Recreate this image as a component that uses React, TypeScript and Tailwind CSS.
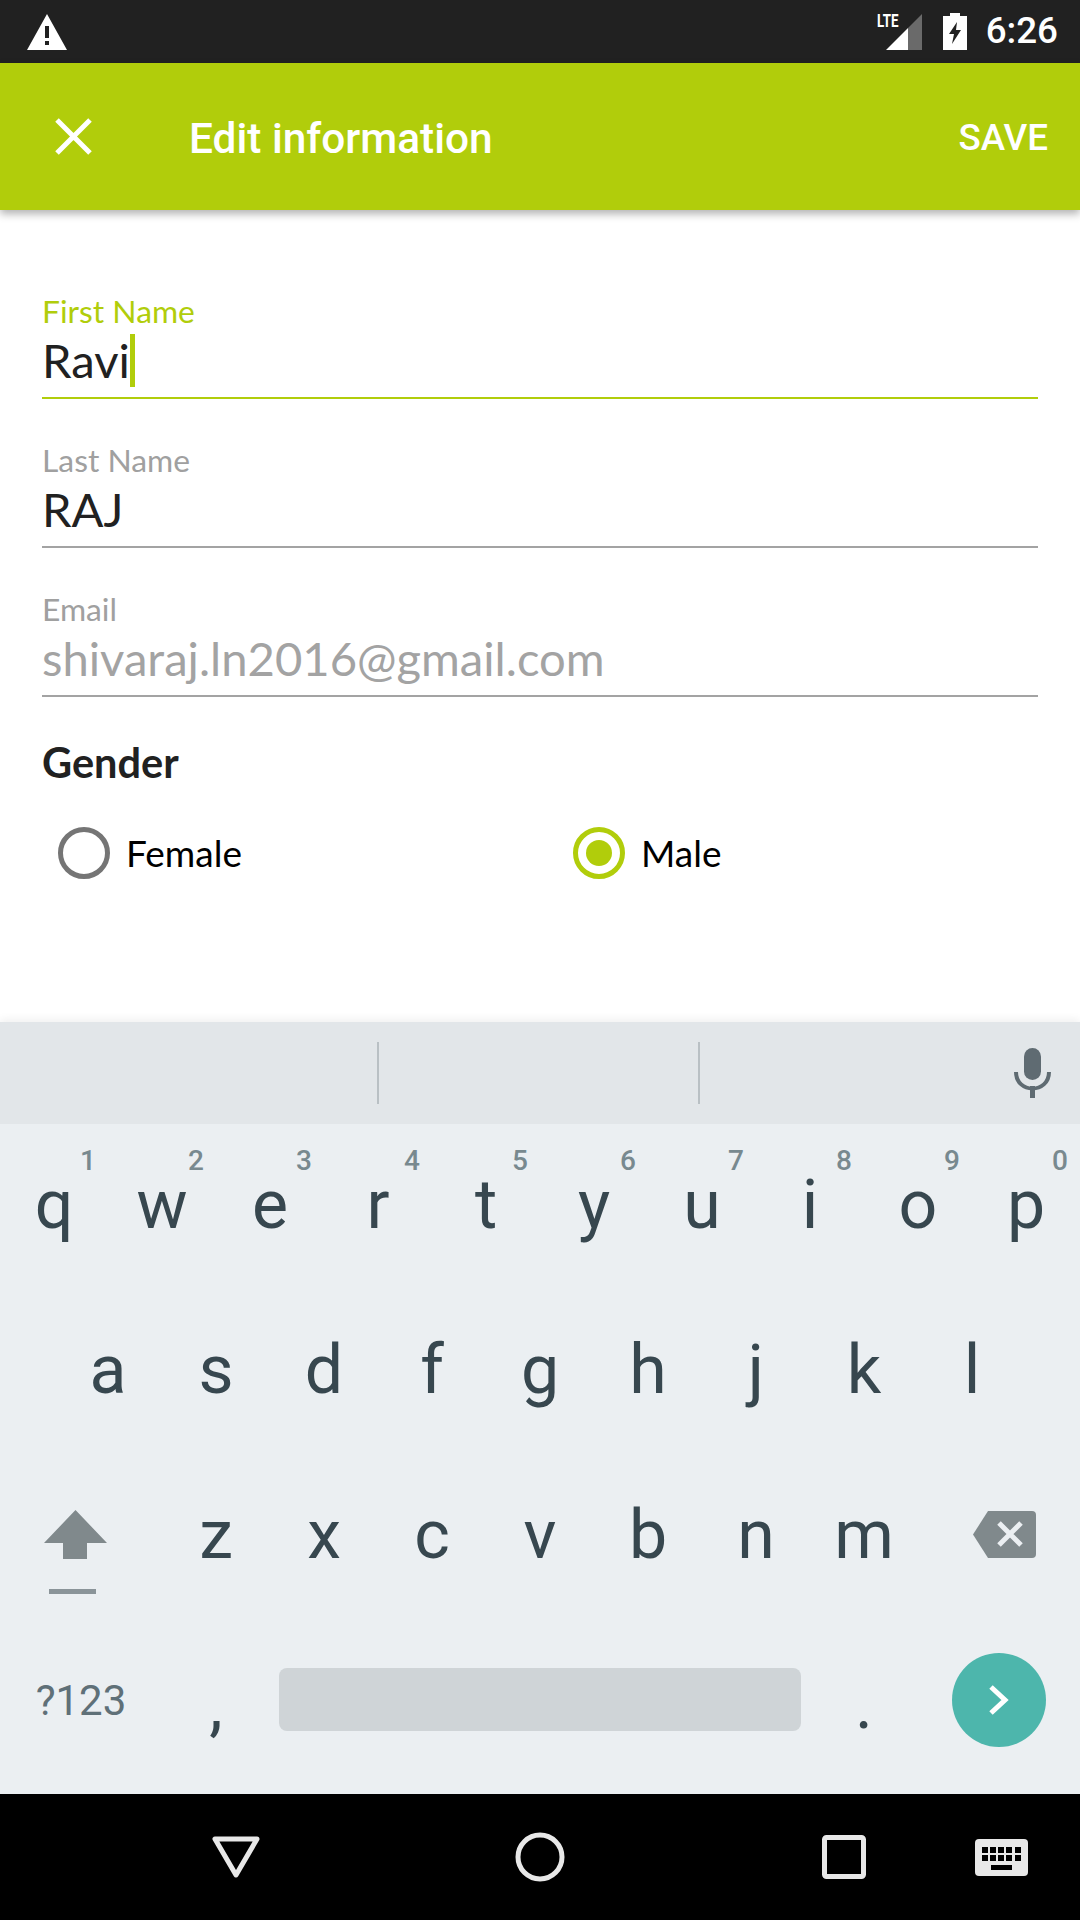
import React from 'react';

const topRow: [string, string][] = [
  ['q', '1'], ['w', '2'], ['e', '3'], ['r', '4'], ['t', '5'],
  ['y', '6'], ['u', '7'], ['i', '8'], ['o', '9'], ['p', '0'],
];
const middleRow = ['a', 's', 'd', 'f', 'g', 'h', 'j', 'k', 'l'];
const bottomRow = ['z', 'x', 'c', 'v', 'b', 'n', 'm'];

const Key: React.FC<{ label: string; hint?: string }> = ({ label, hint }) => (
  <div className="relative w-[108px] h-full flex items-center justify-center pb-[3px] text-[68px] leading-none text-[#37474f]">
    {label}
    {hint && (
      <span className="absolute top-[19px] right-[12px] text-[28px] leading-[36px] font-medium text-[#78898f]">{hint}</span>
    )}
  </div>
);

const Field: React.FC<{ label: string; value: string; focused?: boolean; disabled?: boolean }> = ({
  label,
  value,
  focused,
  disabled,
}) => (
  <div className={`border-b-2 pb-[9px] ${focused ? 'border-[#b1cd0b]' : 'border-[#a3a3a3]'}`}>
    <div className={`pt-[1px] h-[36px] text-[31.8px] leading-[36px] ${focused ? 'text-[#b1cd0b]' : 'text-[#a0a0a0]'}`}>{label}</div>
    <div className={`mt-[4px] flex items-center h-[56px] text-[47.2px] leading-[56px] ${disabled ? 'text-[#a3a3a3]' : 'text-[#212121]'}`}>
      {value}
      {focused && <span className="w-[5px] h-[53px] bg-[#b1cd0b]" />}
    </div>
  </div>
);

const Radio: React.FC<{ label: string; checked?: boolean; className?: string }> = ({ label, checked, className }) => (
  <div className={`flex items-center gap-[16px] ${className ?? ''}`}>
    <span
      className={`w-[52px] h-[52px] rounded-full border-[5px] flex items-center justify-center ${
        checked ? 'border-[#b1cd0b]' : 'border-[#757575]'
      }`}
    >
      {checked && <span className="w-[26px] h-[26px] rounded-full bg-[#b1cd0b]" />}
    </span>
    <span className="text-[37px] leading-[44px] text-black">{label}</span>
  </div>
);

export default function App() {
  return (
    <div className="w-[1080px] h-[1920px] flex flex-col bg-white overflow-hidden font-['Lato',sans-serif]">
      {/* status bar */}
      <div className="h-[63px] shrink-0 bg-[#212121] flex items-center pl-[27px] pr-[22px] font-['Roboto',sans-serif]">
        <svg width="40" height="36" viewBox="0 0 40 36">
          <path fillRule="evenodd" fill="#fff" d="M20 0 L40 36 H0 Z M18 12 V24 H22 V12 Z M18 27 V31 H22 V27 Z" />
        </svg>
        <div className="ml-auto relative w-[47px] h-[37px] mr-[21px]">
          <svg width="36" height="36" viewBox="0 0 36 36" className="absolute right-0 bottom-0">
            <path fill="#6a6a6a" d="M36 0 V36 H22 V14 Z" />
            <path fill="#fff" d="M22 14 V36 H0 Z" />
          </svg>
          <span className="absolute left-[2px] top-[-2px] text-[19px] leading-[20px] font-bold text-white scale-x-70 origin-left">LTE</span>
        </div>
        <svg width="24" height="37" viewBox="0 0 24 37">
          <path fillRule="evenodd" fill="#fff" d="M7 0 H17 V3 H24 V37 H0 V3 H7 Z M14 9 L6 21 H11 L9 31 L18 17 H13 Z" />
        </svg>
        <span className="ml-[19px] text-[36.75px] leading-none font-medium text-white">6:26</span>
      </div>

      {/* app bar */}
      <div className="relative z-10 h-[147px] shrink-0 bg-[#b1cd0b] shadow-[0_4px_8px_rgba(0,0,0,0.3)] flex items-center pl-[55px] pr-[32px] text-white font-['Roboto',sans-serif]">
        <svg width="37" height="37" viewBox="0 0 37 37" stroke="#fff" strokeWidth="5">
          <path d="M2 2 L35 35 M35 2 L2 35" />
        </svg>
        <span className="ml-[97px] mt-[5px] text-[42.4px] leading-none font-medium">Edit information</span>
        <span className="ml-auto mt-[4px] text-[36.75px] leading-none font-medium">SAVE</span>
      </div>

      {/* form */}
      <div className="flex-1 px-[42px] pt-[82px]">
        <div className="flex flex-col gap-[42px]">
          <Field label="First Name" value="Ravi" focused />
          <Field label="Last Name" value="RAJ" />
          <Field label="Email" value="shivaraj.ln2016@gmail.com" disabled />
        </div>
        <div className="mt-[41px] text-[41.5px] leading-[48px] font-bold text-[#212121]">Gender</div>
        <div className="mt-[41px] pl-[16px] flex">
          <Radio label="Female" className="w-[515px]" />
          <Radio label="Male" checked />
        </div>
      </div>

      {/* keyboard */}
      <div className="relative h-[772px] shrink-0 bg-[#ebeff2] flex flex-col font-['Roboto',sans-serif] shadow-[0_-3px_8px_rgba(0,0,0,0.06)]">
        <div className="h-[102px] bg-[#e2e6e9] flex items-center">
          <div className="ml-[377px] w-[2px] h-[62px] bg-[#b9c0c4]" />
          <div className="ml-[319px] w-[2px] h-[62px] bg-[#b9c0c4]" />
          <svg className="ml-[314px]" width="37" height="50" viewBox="0 0 37 50">
            <rect x="10" y="0" width="17" height="32" rx="8.5" fill="#5f6b72" />
            <path d="M2 24 C2 46 35 46 35 24" fill="none" stroke="#5f6b72" strokeWidth="4" />
            <rect x="16" y="38" width="5" height="12" fill="#5f6b72" />
          </svg>
        </div>
        <div className="h-[165px] flex">
          {topRow.map(([k, n]) => <Key key={k} label={k} hint={n} />)}
        </div>
        <div className="h-[165px] flex pl-[54px]">
          {middleRow.map((k) => <Key key={k} label={k} />)}
        </div>
        <div className="h-[165px] flex">
          <div className="w-[162px] h-full flex flex-col items-start pl-[44px] pt-[56px]">
            <svg width="63" height="49" viewBox="0 0 63 49">
              <path fill="#80898c" d="M31.5 0 L63 33 H43 V49 H19 V33 H0 Z" />
            </svg>
            <div className="mt-[30px] ml-[5px] w-[47px] h-[5px] bg-[#8a9499]" />
          </div>
          {bottomRow.map((k) => <Key key={k} label={k} />)}
          <div className="w-[162px] h-full flex items-start pl-[55px] pt-[57px]">
            <svg width="63" height="47" viewBox="0 0 63 47">
              <path fill="#80898c" d="M15 0 H59 Q63 0 63 4 V43 Q63 47 59 47 H15 L0 23.5 Z" />
              <path stroke="#ebeff2" strokeWidth="5" d="M26 12 L48 34 M48 12 L26 34" />
            </svg>
          </div>
        </div>
        <div className="flex-1 flex">
          <div className="w-[162px] h-full flex items-center justify-center pb-[11px] text-[42px] leading-none text-[#5f7078]">?123</div>
          <Key label="," />
          <div className="w-[540px] h-full px-[9px] pt-[49px]">
            <div className="h-[63px] rounded-[8px] bg-[#cfd4d7]" />
          </div>
          <Key label="." />
          <div className="w-[162px] h-full flex items-start pl-[34px] pt-[34px]">
            <div className="w-[94px] h-[94px] rounded-full bg-[#4db6ac] flex items-center justify-center">
              <svg width="20" height="30" viewBox="0 0 20 30" fill="none" stroke="#fff" strokeWidth="5">
                <path d="M2 2 L16 15 L2 28" />
              </svg>
            </div>
          </div>
        </div>
      </div>

      {/* nav bar */}
      <div className="h-[126px] shrink-0 bg-black flex items-center pl-[212px]">
        <svg width="48" height="42" viewBox="0 0 48 42" fill="none" stroke="#e8e8e8" strokeWidth="5" strokeLinejoin="round">
          <path d="M3 3 H45 L24 39 Z" />
        </svg>
        <svg className="ml-[255px]" width="50" height="50" viewBox="0 0 50 50" fill="none" stroke="#e8e8e8" strokeWidth="5">
          <circle cx="25" cy="25" r="22" />
        </svg>
        <svg className="ml-[257px]" width="44" height="44" viewBox="0 0 44 44" fill="none" stroke="#e8e8e8" strokeWidth="5">
          <rect x="2.5" y="2.5" width="39" height="39" rx="2" />
        </svg>
        <svg className="ml-[109px]" width="53" height="37" viewBox="0 0 53 37">
          <rect width="53" height="37" rx="4" fill="#e8e8e8" />
          <g fill="#000">
            <rect x="7" y="8" width="6" height="6" /><rect x="15" y="8" width="6" height="6" /><rect x="23" y="8" width="6" height="6" /><rect x="31" y="8" width="6" height="6" /><rect x="40" y="8" width="6" height="6" />
            <rect x="7" y="16" width="6" height="6" /><rect x="15" y="16" width="6" height="6" /><rect x="23" y="16" width="6" height="6" /><rect x="31" y="16" width="6" height="6" /><rect x="40" y="16" width="6" height="6" />
            <rect x="16" y="26" width="21" height="5" />
          </g>
        </svg>
      </div>
    </div>
  );
}
